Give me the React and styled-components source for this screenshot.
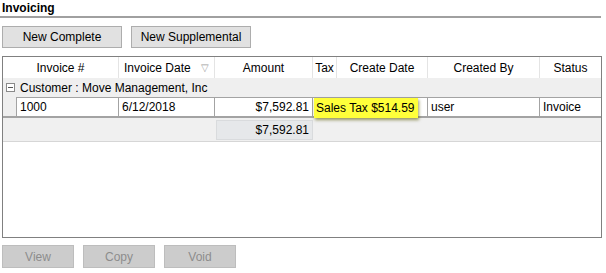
import React from 'react'
import styled, { createGlobalStyle } from 'styled-components'

const GlobalStyle = createGlobalStyle`
  body {
    margin: 0;
    background: #ffffff;
    font-family: "Liberation Sans", Arial, sans-serif;
    font-size: 12px;
    color: #000;
  }
`

const Page = styled.div`
  width: 606px;
  height: 273px;
  overflow: hidden;
`

const Title = styled.div`
  width: 601px;
  height: 18px;
  padding: 1px 0 0 2px;
  box-sizing: border-box;
  font-weight: bold;
  line-height: 14px;
  border-bottom: 2px solid #a0a0a0;
`

const Toolbar = styled.div`
  display: flex;
  gap: 9px;
  padding-left: 2px;
  margin-top: ${p => p.top}px;
`

const Button = styled.button`
  width: ${p => p.w}px;
  height: ${p => p.h}px;
  padding: 0;
  font-family: "Liberation Sans", Arial, sans-serif;
  font-size: 12px;
  background: ${p => (p.disabled ? '#cccccc' : '#e1e1e1')};
  color: ${p => (p.disabled ? '#8c8c8c' : '#000')};
  border: 1px solid ${p => (p.disabled ? '#bdbdbd' : '#adadad')};
`

const Table = styled.div`
  margin: 8px 0 0 2px;
  width: 600px;
  height: 182px;
  box-sizing: border-box;
  border: 1px solid #808080;
  display: flex;
  flex-direction: column;
`

const cols = '13px 103px 96px 98px 24px 91px 112px 61px'

const HeaderRow = styled.div`
  display: grid;
  grid-template-columns: ${cols};
  height: 21px;
  background: #fff;
`

const HeadCell = styled.div`
  grid-column: ${p => p.span || 'auto'};
  display: flex;
  align-items: center;
  justify-content: ${p => (p.left ? 'space-between' : 'center')};
  padding: ${p => (p.left ? '0 5px 0 5px' : '0')};
  border-right: ${p => (p.last ? 'none' : '1px solid #e4e4e4')};
  white-space: nowrap;
`

const SortMark = styled.span`
  color: #a0a0a0;
  font-size: 10px;
`

const GroupRow = styled.div`
  height: 19px;
  background: #efefef;
  display: flex;
  align-items: center;
  gap: 5px;
  padding-left: 3px;
`

const Toggle = styled.span`
  width: 7px;
  height: 7px;
  border: 1px solid #8a8a8a;
  background: #fff;
  position: relative;
  &::after {
    content: '';
    position: absolute;
    left: 1px;
    right: 1px;
    top: 3px;
    height: 1px;
    background: #555;
  }
`

const DataRow = styled.div`
  display: grid;
  grid-template-columns: ${cols};
  height: 21px;
  box-sizing: border-box;
  background: #efefef;
  border-bottom: 2px solid #a3a3a3;
`

const Cell = styled.div`
  position: relative;
  display: flex;
  align-items: center;
  justify-content: ${p => (p.right ? 'flex-end' : 'flex-start')};
  padding: 0 ${p => (p.right ? '3px' : '0')} 0 ${p => (p.right ? '0' : '3px')};
  background: ${p => (p.blank ? 'transparent' : '#fff')};
  border-top: ${p => (p.blank ? 'none' : '1px solid #a3a3a3')};
  border-left: ${p => (p.first ? '1px solid #a3a3a3' : 'none')};
  border-right: ${p => (p.blank || p.last ? 'none' : '1px solid #a3a3a3')};
  white-space: nowrap;
`

const TaxTip = styled.div`
  position: absolute;
  left: 1px;
  top: 0;
  height: 20px;
  padding: 0 3px 0 2px;
  display: flex;
  align-items: center;
  background: #ffff3a;
  box-shadow: 1px 2px 3px rgba(90, 90, 0, 0.6);
  z-index: 2;
`

const FooterRow = styled.div`
  display: grid;
  grid-template-columns: ${cols};
  height: 24px;
  box-sizing: border-box;
  background: #f0f0f0;
  border-bottom: 1px solid #d6d6d6;
  padding: 2px 0 1px;
`

const TotalBox = styled.div`
  grid-column: 4;
  display: flex;
  align-items: center;
  justify-content: flex-end;
  padding-right: 3px;
  margin-left: 1px;
  background: #e6e8ea;
  border: 1px solid #d9dbdd;
`

export default function App() {
  return (
    <Page>
      <GlobalStyle />
      <Title>Invoicing</Title>
      <Toolbar top={8}>
        <Button w={120} h={22}>New Complete</Button>
        <Button w={120} h={22}>New Supplemental</Button>
      </Toolbar>
      <Table>
        <HeaderRow>
          <HeadCell span="1 / span 2">Invoice #</HeadCell>
          <HeadCell left>Invoice Date<SortMark>▽</SortMark></HeadCell>
          <HeadCell>Amount</HeadCell>
          <HeadCell>Tax</HeadCell>
          <HeadCell>Create Date</HeadCell>
          <HeadCell>Created By</HeadCell>
          <HeadCell last>Status</HeadCell>
        </HeaderRow>
        <GroupRow>
          <Toggle />
          Customer : Move Management, Inc
        </GroupRow>
        <DataRow>
          <Cell blank />
          <Cell first>1000</Cell>
          <Cell>6/12/2018</Cell>
          <Cell right>$7,592.81</Cell>
          <Cell>
            <TaxTip>Sales Tax $514.59</TaxTip>
          </Cell>
          <Cell />
          <Cell>user</Cell>
          <Cell last>Invoice</Cell>
        </DataRow>
        <FooterRow>
          <TotalBox>$7,592.81</TotalBox>
        </FooterRow>
      </Table>
      <Toolbar top={7}>
        <Button w={72} h={23} disabled>View</Button>
        <Button w={72} h={23} disabled>Copy</Button>
        <Button w={72} h={23} disabled>Void</Button>
      </Toolbar>
    </Page>
  )
}
